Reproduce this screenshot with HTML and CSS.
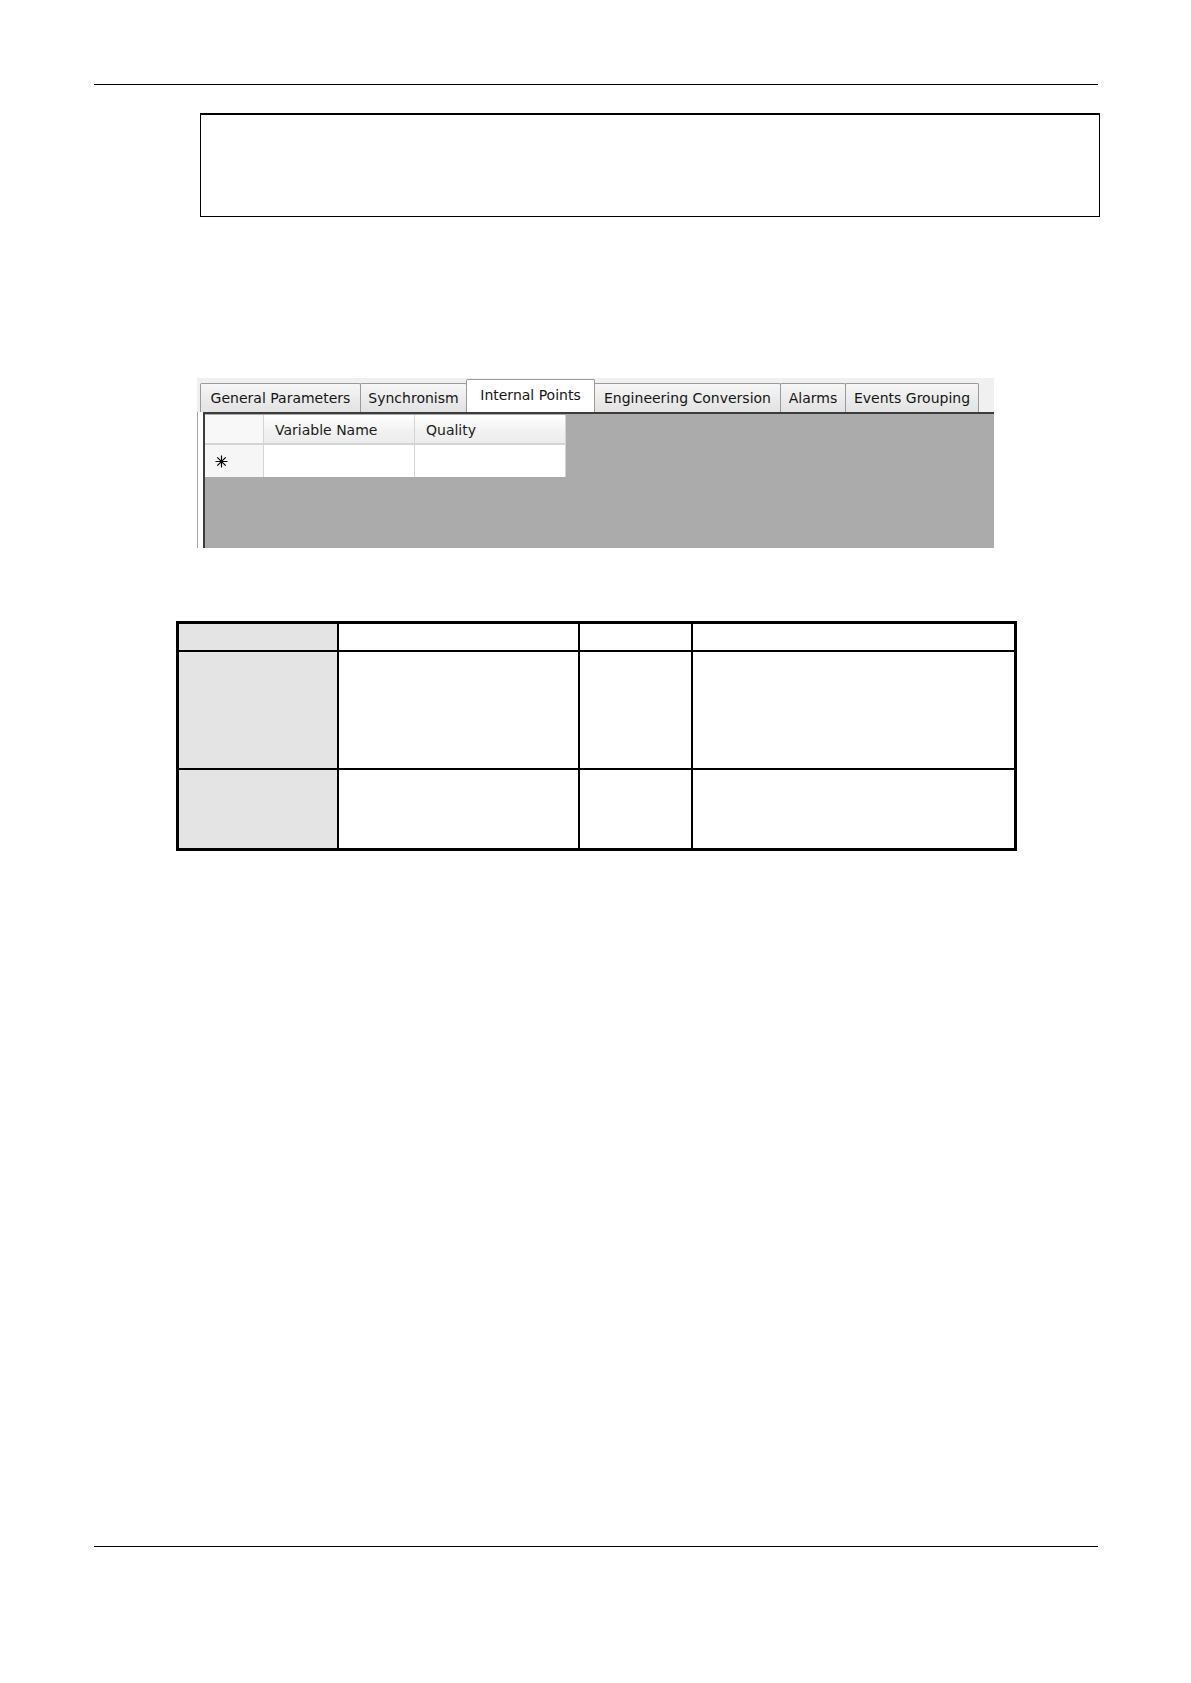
FILE: index.html
```html
<!DOCTYPE html>
<html lang="en">
<head>
<meta charset="utf-8">
<title>Internal Points</title>
<link rel="stylesheet" href="styles.css">
</head>
<body>
<div class="page">
  <div class="rule rule-top"></div>
  <div class="note"></div>

  <div class="shot">
    <div class="tabstrip">
      <div class="tab tab-general">General Parameters</div>
      <div class="tab tab-sync">Synchronism</div>
      <div class="tab tab-internal active">Internal Points</div>
      <div class="tab tab-eng">Engineering Conversion</div>
      <div class="tab tab-alarms">Alarms</div>
      <div class="tab tab-events">Events Grouping</div>
    </div>
    <div class="panel">
      <div class="grid-area">
        <div class="dgv">
          <div class="cell corner"></div>
          <div class="cell colhead">Variable Name</div>
          <div class="cell colhead">Quality</div>
          <div class="cell rowhead">
            <svg class="newrow" width="13" height="13" viewBox="0 0 13 13" aria-hidden="true">
              <path d="M6.5 0.5V12.5M0.5 6.5H12.5M2.3 2.3L10.7 10.7M10.7 2.3L2.3 10.7" stroke="#000" stroke-width="1.2" fill="none"/>
            </svg>
          </div>
          <div class="cell data"></div>
          <div class="cell data"></div>
        </div>
      </div>
    </div>
  </div>

  <div class="table">
    <div class="tc first"></div>
    <div class="tc"></div>
    <div class="tc"></div>
    <div class="tc"></div>
    <div class="tc first"></div>
    <div class="tc"></div>
    <div class="tc"></div>
    <div class="tc"></div>
    <div class="tc first"></div>
    <div class="tc"></div>
    <div class="tc"></div>
    <div class="tc"></div>
  </div>

  <div class="rule rule-bottom"></div>
</div>
</body>
</html>
```

FILE: styles.css
```css
html, body {
  margin: 0;
  padding: 0;
  background: #ffffff;
}

body {
  font-family: "DejaVu Sans", "Liberation Sans", sans-serif;
  color: #111;
}

.page {
  width: 1191px;
  height: 1683px;
  display: flex;
  flex-direction: column;
  align-items: flex-start;
}

.rule {
  width: 1004px;
  margin-left: 94px;
  border-top: 1px solid #000;
}

.rule-top {
  margin-top: 84px;
}

.note {
  box-sizing: border-box;
  width: 900px;
  height: 104px;
  margin-top: 28px;
  margin-left: 200px;
  border: 1px solid #000;
  border-top-width: 2px;
}

/* ---------- application screenshot ---------- */
.shot {
  box-sizing: border-box;
  width: 797px;
  height: 170px;
  margin-top: 161px;
  margin-left: 197px;
  background: #f0f0f0;
  display: flex;
  flex-direction: column;
}

.tabstrip {
  height: 34px;
  display: flex;
  align-items: flex-end;
  padding-left: 3px;
}

.tab {
  box-sizing: border-box;
  height: 29px;
  margin-right: -1px;
  border: 1px solid #9a9a9a;
  border-bottom: none;
  border-radius: 2px 2px 0 0;
  background: linear-gradient(#f6f6f6, #e2e2e2);
  font-size: 14px;
  line-height: 28px;
  text-align: center;
  white-space: nowrap;
  color: #151515;
}

.tab.active {
  position: relative;
  z-index: 1;
  height: 33px;
  padding-top: 1px;
  background: #ffffff;
}

.tab-general { width: 161px; }
.tab-sync { width: 107px; }
.tab-internal { width: 129px; }
.tab-eng { width: 187px; }
.tab-alarms { width: 66px; }
.tab-events { width: 134px; }

.panel {
  flex: 1;
  display: flex;
  background: #ffffff;
  border-left: 1px solid #a3a3a3;
  padding-left: 5px;
}

.grid-area {
  flex: 1;
  background: #ababab;
  border-top: 2px solid #3c3c3c;
  border-left: 2px solid #3c3c3c;
  padding: 1px 0 0 0;
}

.dgv {
  display: grid;
  grid-template-columns: 58px 150px 150px;
  grid-template-rows: 28px 32px;
  gap: 2px 1px;
  width: max-content;
  background: #d4d4d4;
  border-right: 1px solid #d4d4d4;
}

.cell {
  box-sizing: border-box;
}

.corner {
  background: #f8f8f8;
}

.colhead {
  background: linear-gradient(#ffffff, #f1f1f1 60%, #ececec);
  font-size: 14px;
  line-height: 20px;
  padding: 5px 0 0 11px;
  color: #1a1a1a;
  white-space: nowrap;
}

.rowhead {
  background: #f6f6f6;
  display: flex;
  align-items: center;
  padding-left: 10px;
}

.newrow {
  display: block;
}

.data {
  background: #ffffff;
}

/* ---------- data table ---------- */
.table {
  box-sizing: border-box;
  width: 841px;
  height: 230px;
  margin-top: 73px;
  margin-left: 176px;
  padding: 3px;
  background: #000;
  display: grid;
  grid-template-columns: 158px 239px 111px 321px;
  grid-template-rows: 26px 116px 78px;
  gap: 2px;
}

.tc {
  background: #ffffff;
}

.tc.first {
  background: #e4e4e4;
}

.rule-bottom {
  margin-top: 695px;
}
```
